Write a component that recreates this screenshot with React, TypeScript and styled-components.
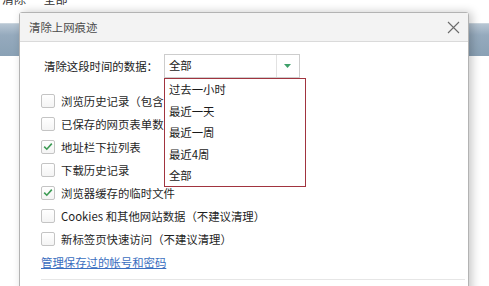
import { FC } from "react";
import styled, { createGlobalStyle } from "styled-components";

const GlobalStyle = createGlobalStyle`
    html, body {
        margin: 0;
        padding: 0;
        background: #ffffff;
    }
    body {
        font-family: "Noto Sans CJK SC", "Noto Sans", sans-serif;
    }
`;

const Page = styled.div`
    position: relative;
    width: 489px;
    height: 286px;
    overflow: hidden;
    background: #ffffff;
`;

const PageCaption = styled.div`
    margin-top: -8px;
    padding-left: 2px;
    height: 14px;
    font-size: 12px;
    line-height: 14px;
    color: #333;
    white-space: nowrap;
`;

const PageToolbar = styled.div`
    margin-top: 17px;
    height: 32px;
    background: linear-gradient(180deg, #b7c6d3 0%, #95aabd 35%, #8aa1b5 100%);
    border-top: 1px solid #c9d4dd;
`;

const Dialog = styled.div`
    position: absolute;
    left: 19px;
    top: 12px;
    width: 448px;
    height: 300px;
    background: #ffffff;
    border: 1px solid #b3b3b3;
    border-radius: 3px 3px 0 0;
    box-shadow: 3px 0 10px rgba(0, 0, 0, 0.22);
    display: flex;
    flex-direction: column;
`;

const TitleBar = styled.div`
    height: 28px;
    background: #f3f3f3;
    border-bottom: 1px solid #dadada;
    display: flex;
    align-items: center;
    justify-content: space-between;
    padding: 0 8px 0 9px;
    font-size: 11.4px;
    color: #4a4a4a;
`;

const CloseButton = styled.button`
    width: 14px;
    height: 14px;
    padding: 0;
    border: none;
    background: transparent;
    display: flex;
    align-items: center;
    justify-content: center;
`;

const Body = styled.div`
    padding: 12px 0 0 21px;
    display: flex;
    flex-direction: column;
`;

const RangeRow = styled.div`
    display: flex;
    align-items: center;
    gap: 6px;
    padding-left: 3px;
    font-size: 11.4px;
    color: #1a1a1a;
`;

const SelectWrap = styled.div`
    position: relative;
`;

const SelectBox = styled.div`
    width: 134px;
    height: 22px;
    border: 1px solid #cdcdcd;
    display: flex;
    background: #fff;
`;

const SelectValue = styled.div`
    flex: 1;
    padding-left: 4px;
    font-size: 11.4px;
    line-height: 21px;
    color: #1a1a1a;
`;

const SelectArrow = styled.div`
    width: 22px;
    border-left: 1px solid #e2e2e2;
    display: flex;
    align-items: center;
    justify-content: center;
`;

const DropList = styled.ul`
    position: absolute;
    left: 0;
    top: 24px;
    width: 140px;
    height: 107px;
    margin: 0;
    padding: 0;
    list-style: none;
    background: #fff;
    border: 1px solid #a1343f;
    box-sizing: content-box;
    z-index: 2;
`;

const DropItem = styled.li`
    height: 21.6px;
    line-height: 21px;
    padding-left: 4px;
    font-size: 11.4px;
    color: #1a1a1a;
`;

const Options = styled.div`
    margin-top: 11px;
    display: flex;
    flex-direction: column;
`;

const OptionRow = styled.label`
    height: 23px;
    display: flex;
    align-items: center;
    gap: 6px;
    font-size: 11.4px;
    color: #1f1f1f;
    white-space: nowrap;
`;

const Box = styled.span<{ $checked: boolean }>`
    width: 12px;
    height: 12px;
    border: 1px solid #c4c4c4;
    border-radius: 2px;
    background: linear-gradient(180deg, #ffffff 0%, #f4f4f4 100%);
    display: flex;
    align-items: center;
    justify-content: center;
`;

const ManageLink = styled.a`
    margin-top: 4px;
    font-size: 11.4px;
    line-height: 16px;
    color: #3b6fc0;
    text-decoration: underline;
    width: fit-content;
`;

const Footer = styled.div`
    margin-top: 9px;
    margin-right: 3px;
    border-top: 1px solid #e6e6e6;
    height: 20px;
`;

const options: { label: string; checked: boolean }[] = [
    { label: "浏览历史记录（包含", checked: false },
    { label: "已保存的网页表单数", checked: false },
    { label: "地址栏下拉列表", checked: true },
    { label: "下载历史记录", checked: false },
    { label: "浏览器缓存的临时文件", checked: true },
    { label: "Cookies 和其他网站数据（不建议清理）", checked: false },
    { label: "新标签页快速访问（不建议清理）", checked: false },
];

const ranges = ["过去一小时", "最近一天", "最近一周", "最近4周", "全部"];

const Check: FC<{ checked: boolean }> = ({ checked }) => (
    <Box $checked={checked}>
        {checked && (
            <svg width="10" height="9" viewBox="0 0 10 9">
                <path d="M1.2 4.6 L3.8 7.2 L8.8 1.6" fill="none" stroke="#3d9b54" strokeWidth="1.6" />
            </svg>
        )}
    </Box>
);

const App: FC = () => {
    return (
        <>
            <GlobalStyle />
            <Page>
                <PageCaption>清除 一 全部</PageCaption>
                <PageToolbar />
                <Dialog>
                    <TitleBar>
                        <span>清除上网痕迹</span>
                        <CloseButton>
                            <svg width="13" height="13" viewBox="0 0 13 13">
                                <path d="M1 1 L12 12 M12 1 L1 12" stroke="#6b6b6b" strokeWidth="1.1" />
                            </svg>
                        </CloseButton>
                    </TitleBar>
                    <Body>
                        <RangeRow>
                            <span>清除这段时间的数据：</span>
                            <SelectWrap>
                                <SelectBox>
                                    <SelectValue>全部</SelectValue>
                                    <SelectArrow>
                                        <svg width="7" height="4" viewBox="0 0 7 4">
                                            <path d="M0 0 H7 L3.5 4 Z" fill="#3fa06a" />
                                        </svg>
                                    </SelectArrow>
                                </SelectBox>
                                <DropList>
                                    {ranges.map((r) => (
                                        <DropItem key={r}>{r}</DropItem>
                                    ))}
                                </DropList>
                            </SelectWrap>
                        </RangeRow>
                        <Options>
                            {options.map((o) => (
                                <OptionRow key={o.label}>
                                    <Check checked={o.checked} />
                                    <span>{o.label}</span>
                                </OptionRow>
                            ))}
                        </Options>
                        <ManageLink href="#">管理保存过的帐号和密码</ManageLink>
                        <Footer />
                    </Body>
                </Dialog>
            </Page>
        </>
    );
};

export default App;
